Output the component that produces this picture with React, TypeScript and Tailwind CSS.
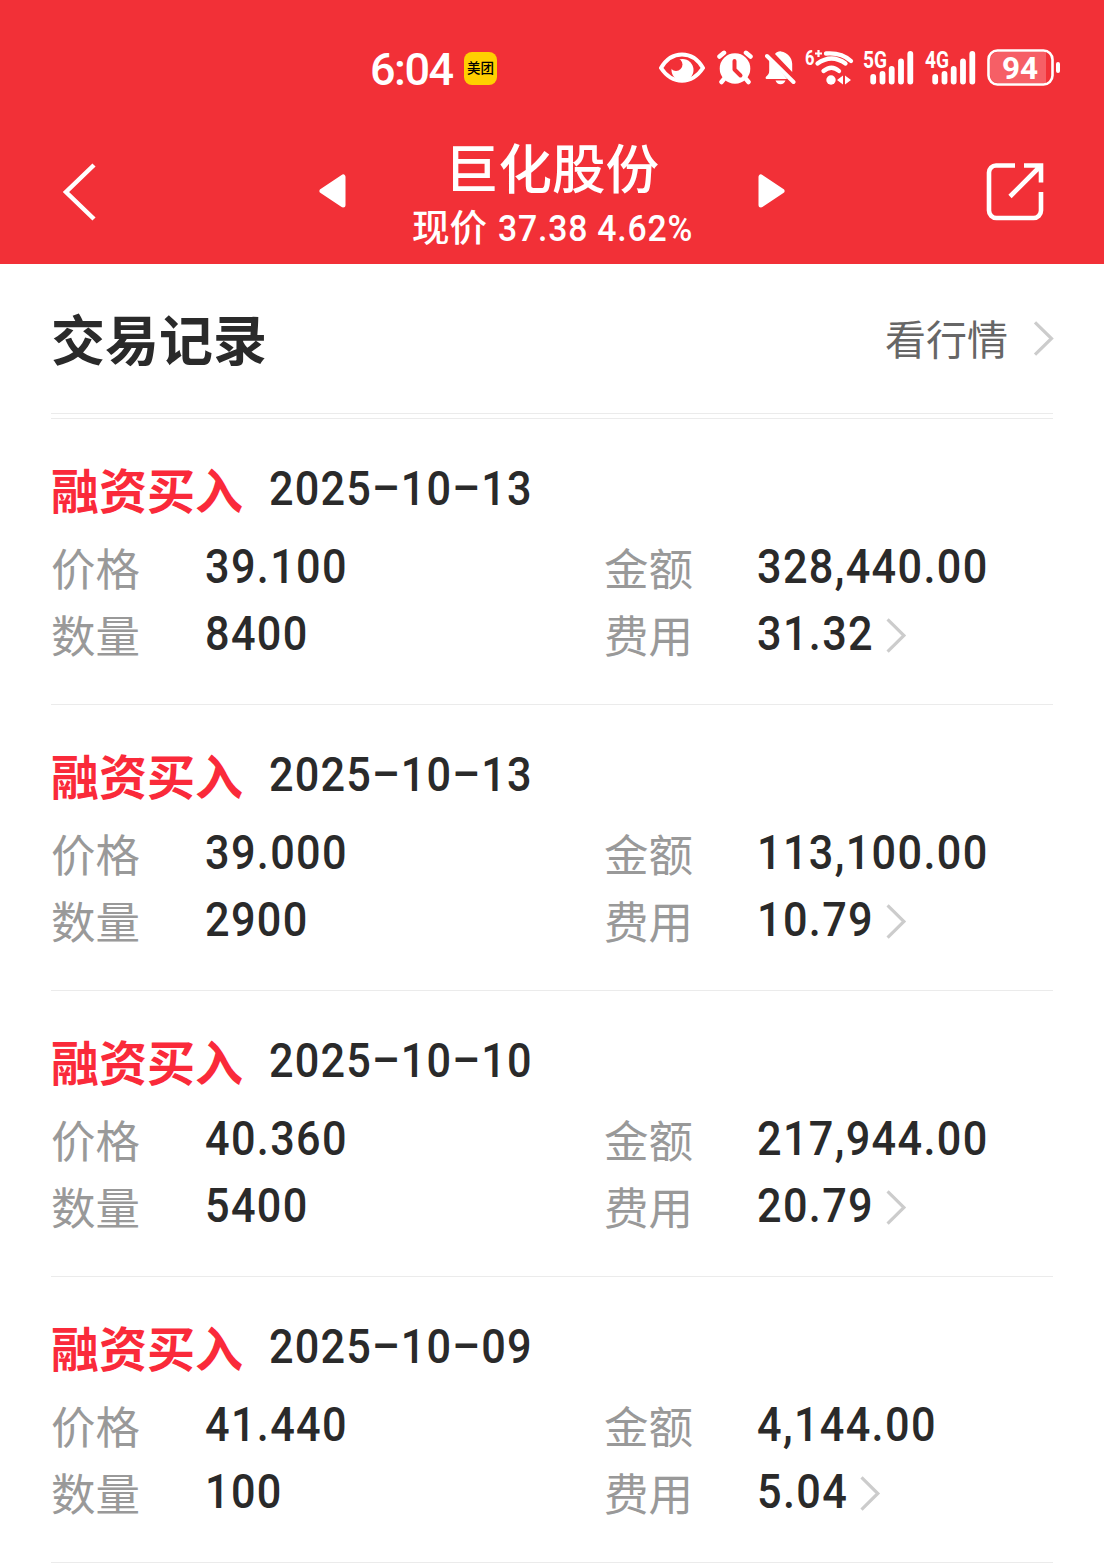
const records = [
  {
    type: "融资买入",
    date: "2025–10–13",
    price: "39.100",
    amount: "328,440.00",
    count: "8400",
    fee: "31.32",
  },
  {
    type: "融资买入",
    date: "2025–10–13",
    price: "39.000",
    amount: "113,100.00",
    count: "2900",
    fee: "10.79",
  },
  {
    type: "融资买入",
    date: "2025–10–10",
    price: "40.360",
    amount: "217,944.00",
    count: "5400",
    fee: "20.79",
  },
  {
    type: "融资买入",
    date: "2025–10–09",
    price: "41.440",
    amount: "4,144.00",
    count: "100",
    fee: "5.04",
  },
]

const EyeIcon = () => (
  <svg width="46" height="40" viewBox="0 0 46 40" fill="none">
    <circle cx="23.500" cy="22" r="11" fill="white" />
    <circle cx="17" cy="16.500" r="6.500" fill="#f23037" />
    <path
      d="M2 20C7 11.500 14 6.500 23 6.500S39 11.500 44 20C39 27.500 32 32.800 23 32.800S7 27.500 2 20Z"
      stroke="white"
      strokeWidth="4"
      strokeLinejoin="round"
    />
  </svg>
)

const AlarmIcon = () => (
  <svg width="36" height="40" viewBox="0 0 36 40" fill="none">
    <circle cx="18" cy="20.500" r="15.300" fill="white" />
    <path
      d="M2.500 8.500 7 4.800M33.500 8.500 29 4.800M7 31l-2.500 3M29 31l2.500 3"
      stroke="white"
      strokeWidth="4.500"
      strokeLinecap="round"
    />
    <path
      d="M17.500 13v8.500l6 6"
      stroke="#f23037"
      strokeWidth="4"
      strokeLinecap="round"
      strokeLinejoin="round"
    />
  </svg>
)

const BellOffIcon = () => (
  <svg width="31" height="40" viewBox="0 0 31 40" fill="none">
    <path
      d="M10 6C11.500 4 13.500 3.200 16 3.400c6.500 1 11 6 11.200 12.300V24L10 6ZM4.200 10l18 21H1.500c-1-.2-1.200-1.600-.5-2.300 2.400-2 3.200-3.200 3.200-6.200V10ZM10.500 32.500h10c-.8 2.300-2.500 3.700-5 3.700s-4.200-1.400-5-3.700Z"
      fill="white"
    />
    <path
      d="M2 8l26.500 26"
      stroke="white"
      strokeWidth="4"
      strokeLinecap="round"
    />
  </svg>
)

const WifiIcon = () => (
  <svg
    width="48"
    height="40"
    viewBox="0 0 48 40"
    fill="none"
    className="overflow-visible"
  >
    <text
      x="0"
      y="17"
      fill="white"
      fontFamily="Roboto"
      fontWeight="700"
      fontSize="21"
      textLength="9.500"
      lengthAdjust="spacingAndGlyphs"
    >
      6
    </text>
    <path d="M10 5.500h7M13.500 2v7" stroke="white" strokeWidth="2.200" />
    <path
      d="M21 5.500c10-.8 18.500 1.500 25 7.500M12.500 15.500c9-6.500 19-6.500 28 0M18.500 23c5.500-4.500 10.500-4.500 15.500 0"
      stroke="white"
      strokeWidth="4.300"
      strokeLinecap="round"
    />
    <circle cx="26" cy="32" r="4.700" fill="white" />
    <path d="M38 27.500v9L32 32ZM40 27.500v9l6-4.500Z" fill="white" />
  </svg>
)

const SignalIcon = ({ label }: { label: string }) => (
  <svg
    width="51"
    height="40"
    viewBox="0 0 51 40"
    fill="none"
    className="overflow-visible"
  >
    <text
      x="0"
      y="19.500"
      fill="white"
      fontFamily="Roboto"
      fontWeight="700"
      fontSize="23"
      textLength="24"
      lengthAdjust="spacingAndGlyphs"
    >
      {label}
    </text>
    <path
      d="M10.200 29v4.500M19.500 26v7.500M28.700 21v12.500M38 13.500v20M47.300 6v27.500"
      stroke="white"
      strokeWidth="5.800"
      strokeLinecap="round"
    />
  </svg>
)

const BatteryIcon = () => (
  <svg width="74" height="40" viewBox="0 0 74 40" fill="none">
    <path d="M11 4h48v31H11a8 8 0 0 1-8-8V12a8 8 0 0 1 8-8Z" fill="#f65f66" />
    <rect
      x="1.500"
      y="2.500"
      width="64"
      height="34"
      rx="9"
      stroke="white"
      strokeWidth="2.600"
    />
    <path
      d="M71 16v7"
      stroke="white"
      strokeWidth="4"
      strokeLinecap="round"
    />
    <text
      x="33"
      y="30.500"
      fill="white"
      fontFamily="Roboto"
      fontWeight="700"
      fontSize="31.500"
      textAnchor="middle"
    >
      94
    </text>
  </svg>
)

const ShareIcon = () => (
  <svg width="60" height="60" viewBox="0 0 60 60" fill="none">
    <path
      d="M30 4.500H11a7 7 0 0 0-7 7v38a7.500 7.500 0 0 0 7.500 7.500h37a7.500 7.500 0 0 0 7.500-7.500V31M39 4.500h17V21.500M56 4.500 25 35.500"
      stroke="white"
      strokeWidth="4.600"
    />
  </svg>
)

const Chevron = () => (
  <svg width="22" height="36" viewBox="0 0 22 36" fill="none">
    <path d="M2 1.300 18.500 17.500 2 33.700" stroke="#cccccc" strokeWidth="3.200" />
  </svg>
)

const StatusBar = () => (
  <div className="h-[120px] pt-12 flex items-start">
    <div className="w-[659px] h-10 pl-[370px] flex items-center">
      <span className="w-[94px] pt-[3px] text-[45px] leading-10 font-medium tracking-[-1.5px]">
        6:04
      </span>
      <span className="w-[33px] h-[33px] rounded-[8px] bg-[#ffd000] text-black text-[13.5px] font-medium flex items-center justify-center">
        美团
      </span>
    </div>
    <EyeIcon />
    <div className="ml-3 flex">
      <AlarmIcon />
    </div>
    <div className="ml-3 flex">
      <BellOffIcon />
    </div>
    <div className="ml-[9px] flex">
      <WifiIcon />
    </div>
    <div className="ml-[10px] flex gap-[11px]">
      <SignalIcon label="5G" />
      <SignalIcon label="4G" />
      <BatteryIcon />
    </div>
  </div>
)

const TitleBar = () => (
  <div className="h-36 pl-[61px] pr-[59px] flex justify-between">
    <svg
      width="36"
      height="60"
      viewBox="0 0 36 60"
      fill="none"
      className="mt-[42px]"
    >
      <path d="M33 3 5 30l28 27" stroke="white" strokeWidth="4.500" />
    </svg>
    <div className="w-[466px] ml-[22px] flex justify-between">
      <svg width="27" height="34" viewBox="0 0 27 34" className="mt-[54px]">
        <path
          d="M24 3v28L3 17Z"
          fill="white"
          stroke="white"
          strokeWidth="5"
          strokeLinejoin="round"
        />
      </svg>
      <div className="flex flex-col items-center whitespace-nowrap">
        <h1 className="mt-[21px] text-[53.500px] leading-[60px] font-medium">
          巨化股份
        </h1>
        <p className="w-[280px] mt-[-3px] flex text-[37.500px] leading-[60px] font-medium">
          <span className="w-[86px] shrink-0">现价</span>
          <span className="origin-left scale-x-90 tracking-[0.9px]">
            37.38 4.62%
          </span>
        </p>
      </div>
      <svg width="27" height="34" viewBox="0 0 27 34" className="mt-[54px]">
        <path
          d="M3 3v28l21-14Z"
          fill="white"
          stroke="white"
          strokeWidth="5"
          strokeLinejoin="round"
        />
      </svg>
    </div>
    <div className="mt-[41px]">
      <ShareIcon />
    </div>
  </div>
)

type RecordProps = (typeof records)[number]

const TradeRecord = ({
  type,
  date,
  price,
  amount,
  count,
  fee,
}: RecordProps) => (
  <div className="h-[286px] pt-11 border-b border-[#ebebeb]">
    <div className="h-[54px] flex items-center">
      <h3 className="w-[218px] pt-[5px] text-[48px] leading-[54px] font-bold text-[#fa2a3a]">
        {type}
      </h3>
      <span className="origin-left scale-x-90 pb-[2px] text-[48px] leading-[54px] font-medium tracking-[1.300px]">
        {date}
      </span>
    </div>
    <div className="mt-[16px] grid grid-cols-[154px_399px_153px_auto] auto-rows-[67px] items-center text-[48px] font-medium tracking-[1.500px]">
      <Label text="价格" />
      <span className="origin-left scale-x-90">{price}</span>
      <Label text="金额" />
      <span className="origin-left scale-x-90">{amount}</span>
      <Label text="数量" />
      <span className="origin-left scale-x-90">{count}</span>
      <Label text="费用" />
      <span className="origin-left scale-x-90 flex items-center gap-[14px]">
        {fee}
        <span className="scale-x-110 pt-[5px]">
          <Chevron />
        </span>
      </span>
    </div>
  </div>
)

const Label = ({ text }: { text: string }) => (
  <span className="pt-[10px] text-[44.500px] font-normal tracking-normal text-[#999999]">
    {text}
  </span>
)

const App = () => {
  return (
    <div className="w-[1104px] h-[1568px] overflow-hidden bg-white font-[Roboto,'Noto_Sans_CJK_SC',sans-serif] text-[#2a2a2a]">
      <header className="h-[264px] bg-[#f23037] text-white">
        <StatusBar />
        <TitleBar />
      </header>
      <main className="px-[51px]">
        <div className="h-[150px] flex items-center justify-between border-b border-[#ebebeb]">
          <h2 className="pt-[8px] text-[54px] leading-[60px] font-bold">
            交易记录
          </h2>
          <div className="-mr-[2px] flex items-center gap-[25px] text-[41px] leading-[60px] text-[#666666]">
            <span className="pt-[5px]">看行情</span>
            <Chevron />
          </div>
        </div>
        <div className="mt-1 border-t border-[#ebebeb]">
          {records.map((record, index) => (
            <TradeRecord key={index} {...record} />
          ))}
        </div>
      </main>
    </div>
  )
}

export default App
